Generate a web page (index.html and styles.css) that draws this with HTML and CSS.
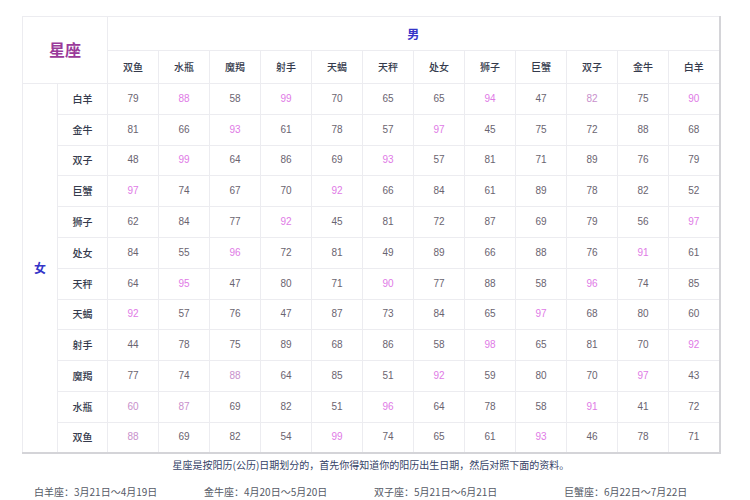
FILE: index.html
```html
<!DOCTYPE html>
<html lang="zh">
<head>
<meta charset="utf-8">
<link rel="stylesheet" href="styles.css">
</head>
<body>
<div class="page">
  <table class="match">
    <colgroup>
      <col class="c-side"><col class="c-label">
      <col class="c-num"><col class="c-num"><col class="c-num"><col class="c-num"><col class="c-num"><col class="c-num">
      <col class="c-num"><col class="c-num"><col class="c-num"><col class="c-num"><col class="c-num"><col class="c-num">
    </colgroup>
    <thead>
      <tr class="r-top">
        <th class="title" colspan="2" rowspan="2">星座</th>
        <th class="male" colspan="12">男</th>
      </tr>
      <tr class="r-head">
        <th>双鱼</th><th>水瓶</th><th>魔羯</th><th>射手</th><th>天蝎</th><th>天秤</th><th>处女</th><th>狮子</th><th>巨蟹</th><th>双子</th><th>金牛</th><th>白羊</th>
      </tr>
    </thead>
    <tbody>
      <tr><td class="female" rowspan="12">女</td><td class="label">白羊</td><td>79</td><td class="hi">88</td><td>58</td><td class="hi">99</td><td>70</td><td>65</td><td>65</td><td class="hi">94</td><td>47</td><td class="lt">82</td><td>75</td><td class="hi">90</td></tr>
      <tr><td class="label">金牛</td><td>81</td><td>66</td><td class="hi">93</td><td>61</td><td>78</td><td>57</td><td class="hi">97</td><td>45</td><td>75</td><td>72</td><td>88</td><td>68</td></tr>
      <tr><td class="label">双子</td><td>48</td><td class="hi">99</td><td>64</td><td>86</td><td>69</td><td class="hi">93</td><td>57</td><td>81</td><td>71</td><td>89</td><td>76</td><td>79</td></tr>
      <tr><td class="label">巨蟹</td><td class="hi">97</td><td>74</td><td>67</td><td>70</td><td class="hi">92</td><td>66</td><td>84</td><td>61</td><td>89</td><td>78</td><td>82</td><td>52</td></tr>
      <tr><td class="label">狮子</td><td>62</td><td>84</td><td>77</td><td class="hi">92</td><td>45</td><td>81</td><td>72</td><td>87</td><td>69</td><td>79</td><td>56</td><td class="hi">97</td></tr>
      <tr><td class="label">处女</td><td>84</td><td>55</td><td class="hi">96</td><td>72</td><td>81</td><td>49</td><td>89</td><td>66</td><td>88</td><td>76</td><td class="hi">91</td><td>61</td></tr>
      <tr><td class="label">天秤</td><td>64</td><td class="hi">95</td><td>47</td><td>80</td><td>71</td><td class="hi">90</td><td>77</td><td>88</td><td>58</td><td class="hi">96</td><td>74</td><td>85</td></tr>
      <tr><td class="label">天蝎</td><td class="hi">92</td><td>57</td><td>76</td><td>47</td><td>87</td><td>73</td><td>84</td><td>65</td><td class="hi">97</td><td>68</td><td>80</td><td>60</td></tr>
      <tr><td class="label">射手</td><td>44</td><td>78</td><td>75</td><td>89</td><td>68</td><td>86</td><td>58</td><td class="hi">98</td><td>65</td><td>81</td><td>70</td><td class="hi">92</td></tr>
      <tr><td class="label">魔羯</td><td>77</td><td>74</td><td class="lt">88</td><td>64</td><td>85</td><td>51</td><td class="hi">92</td><td>59</td><td>80</td><td>70</td><td class="hi">97</td><td>43</td></tr>
      <tr><td class="label">水瓶</td><td class="lt">60</td><td class="lt">87</td><td>69</td><td>82</td><td>51</td><td class="hi">96</td><td>64</td><td>78</td><td>58</td><td class="hi">91</td><td>41</td><td>72</td></tr>
      <tr><td class="label">双鱼</td><td class="lt">88</td><td>69</td><td>82</td><td>54</td><td class="hi">99</td><td>74</td><td>65</td><td>61</td><td class="hi">93</td><td>46</td><td>78</td><td>71</td></tr>
    </tbody>
  </table>
  <p class="note">星座是按阳历(公历)日期划分的，首先你得知道你的阳历出生日期，然后对照下面的资料。</p>
  <p class="dates"><span class="d1">白羊座：3月21日～4月19日</span><span class="d2">金牛座：4月20日～5月20日</span><span class="d3">双子座：5月21日～6月21日</span><span>巨蟹座：6月22日～7月22日</span></p>
</div>
</body>
</html>
```
FILE: styles.css
```css
html, body {
  margin: 0;
  padding: 0;
  background: #ffffff;
}
.page {
  width: 750px;
  height: 500px;
  overflow: hidden;
  padding: 16px 0 0 22px;
  box-sizing: border-box;
  font-family: "Noto Sans CJK SC", "Liberation Sans", sans-serif;
}
.match {
  width: 698px;
  table-layout: fixed;
  border-collapse: collapse;
  border-top: 1px solid #e2e2e6;
  border-left: 1px solid #e2e2e6;
  border-right: 2px solid #d4d4d8;
  border-bottom: 2px solid #d4d4d8;
}
.c-side { width: 35px; }
.c-label { width: 50px; }
.c-num { width: 51px; }
.match th, .match td {
  border: 1px solid #ececf0;
  padding: 0;
  text-align: center;
  vertical-align: middle;
  font-size: 10px;
  line-height: 12px;
}
.r-top { height: 34px; }
.r-head { height: 33px; }
.match tbody tr { height: 30.8px; }
.match .male {
  border-left: 1px solid #e2e2e6;
  color: #3535c8;
  font-weight: bold;
  font-size: 12px;
}
.match .title {
  color: #9a3a9a;
  font-size: 16px;
  font-weight: bold;
  line-height: 20px;
  padding-bottom: 2px;
  font-family: "Noto Sans CJK SC", serif;
}
.r-head th {
  color: #343a4c;
  font-weight: 500;
}
.match .female {
  color: #3535c8;
  font-weight: bold;
  font-size: 12px;
}
.match .label {
  color: #343a4c;
  font-weight: 500;
}
.match td {
  color: #6a6470;
  font-family: "Liberation Sans", sans-serif;
}
.match td.label, .match td.female {
  font-family: "Noto Sans CJK SC", sans-serif;
}
.match td.hi {
  color: #e07ae6;
}
.match td.lt {
  color: #c890cc;
}
.note {
  margin: 4px 0 0 0;
  width: 698px;
  text-align: center;
  font-size: 10px;
  line-height: 14px;
  color: #344266;
}
.dates {
  margin: 14px 0 0 12px;
  display: flex;
  font-size: 10px;
  line-height: 12px;
  color: #555a66;
  white-space: nowrap;
}
.dates .d1 { width: 170px; }
.dates .d2 { width: 170px; }
.dates .d3 { width: 190px; }
```
